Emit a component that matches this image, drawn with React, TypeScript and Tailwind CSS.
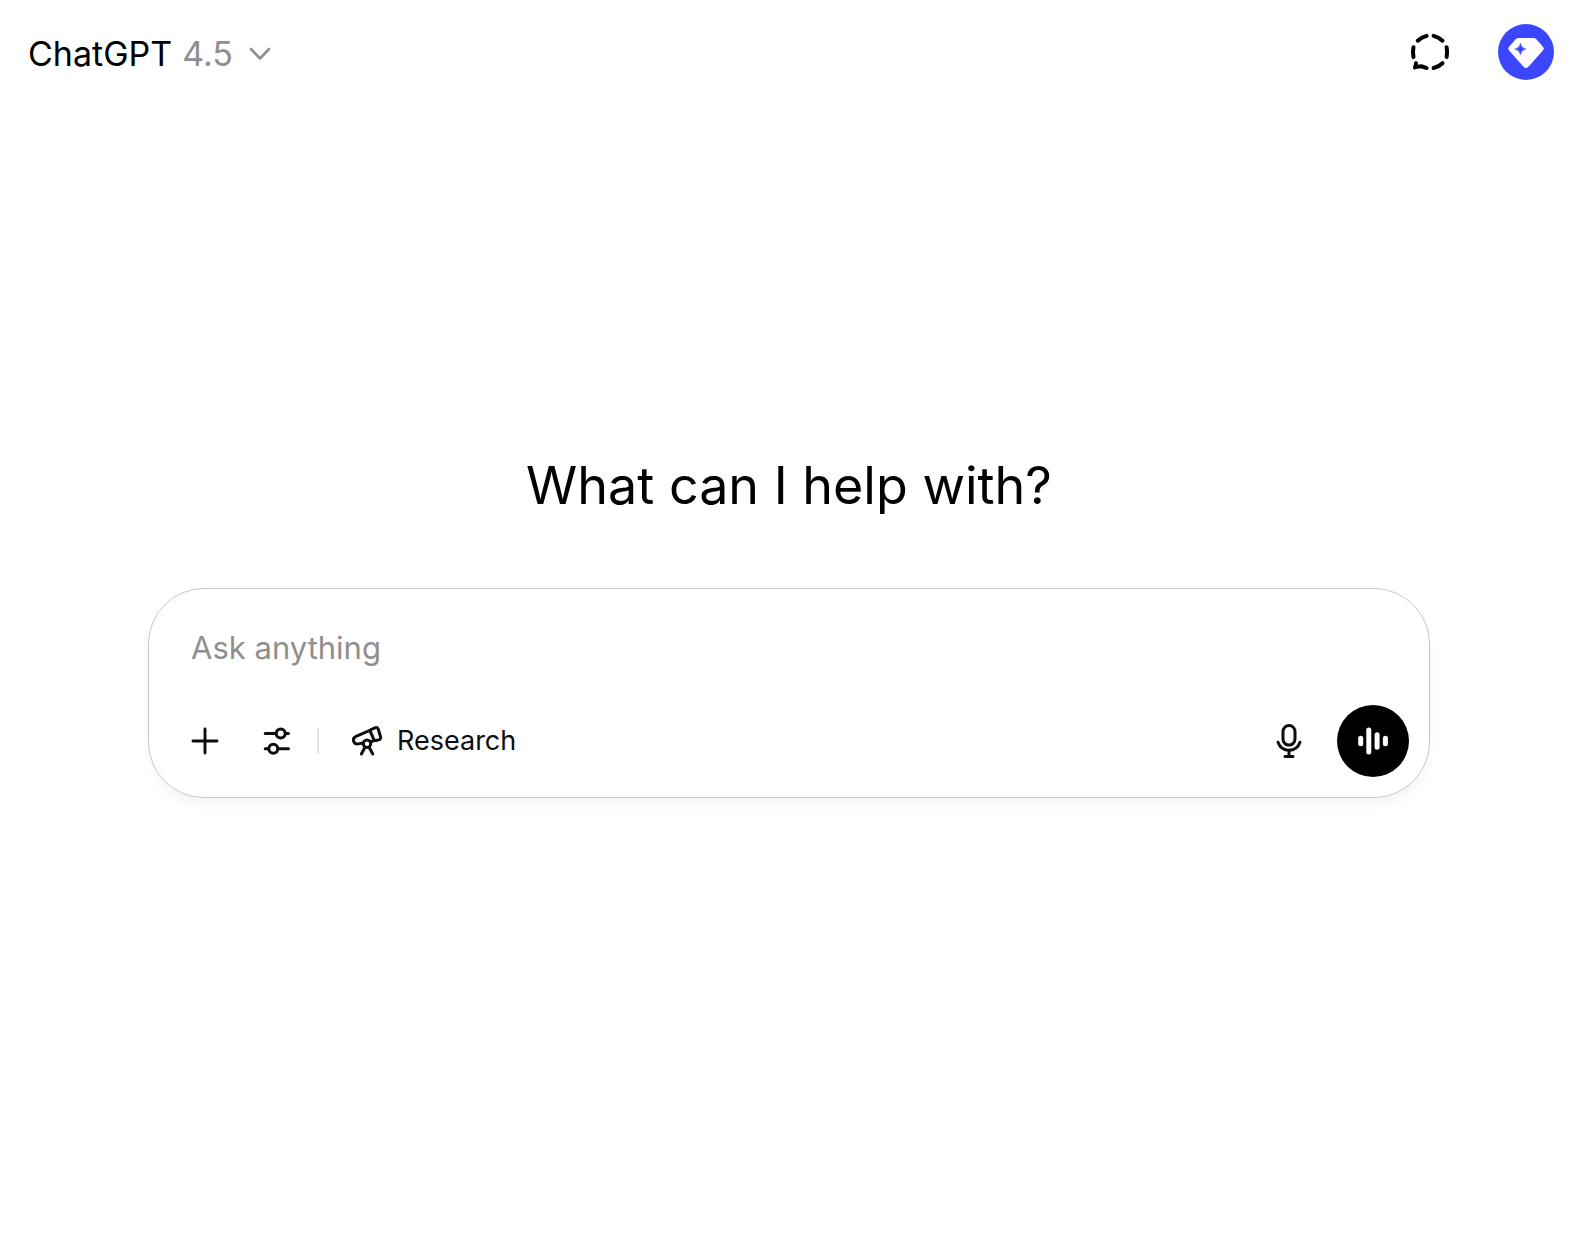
import type { SVGProps } from 'react';

function ChevronIcon(props: SVGProps<SVGSVGElement>) {
  return (
    <svg viewBox="0 0 24 24" fill="none" stroke="currentColor" strokeWidth="2.6" strokeLinecap="round" strokeLinejoin="round" aria-hidden="true" {...props}>
      <path d="M3 8 12 17.500l9-9.500" />
    </svg>
  );
}

function TemporaryChatIcon() {
  return (
    <svg className="w-10 h-10" viewBox="0 0 40 40" fill="none" stroke="currentColor" strokeWidth="4" strokeLinecap="round" strokeLinejoin="round" aria-hidden="true">
      <path d="M7.700 8.700Q11.500 5.200 16.600 3.900" />
      <path d="M23.600 3.900Q28.700 5.200 32.500 8.700" />
      <path d="M36.600 15.200Q37.600 20 36.600 25" />
      <path d="M32.500 31.200Q28.700 34.800 23.600 36" />
      <path d="M16.600 36Q13.500 34.800 11 34.300Q8.500 34.500 5 35.400Q6 33.300 6 31.200" />
      <path d="M3.500 15.200Q2.400 20 3.500 25" />
    </svg>
  );
}

function GemAvatar() {
  return (
    <svg className="w-14 h-14" viewBox="0 0 56 56" aria-hidden="true">
      <circle cx="28" cy="28" r="28" fill="#3c46ff" />
      <path
        d="M20.500 14h15q1.500 0 2.600 1.100l6.800 7.600q1.600 1.900 0 3.800L30.200 43q-2.200 2.100-4.400 0L11.100 26.500q-1.600-1.900 0-3.800l6.800-7.600Q19 14 20.500 14Z"
        fill="#fff"
      />
      <path d="M22.400 19.400Q23.200 24.200 28 25Q23.200 25.800 22.400 30.600Q21.600 25.800 16.800 25Q21.600 24.200 22.400 19.400Z" fill="#3c46ff" stroke="#3c46ff" strokeWidth=".6" strokeLinejoin="round" />
    </svg>
  );
}

function PlusIcon() {
  return (
    <svg className="w-8 h-8" viewBox="0 0 32 32" fill="none" stroke="currentColor" strokeWidth="2.900" strokeLinecap="round" aria-hidden="true">
      <path d="M16 4v24M4 16h24" />
    </svg>
  );
}

function ToolsIcon() {
  return (
    <svg className="w-8 h-8" viewBox="0 0 32 32" fill="none" stroke="currentColor" strokeWidth="3" strokeLinecap="round" aria-hidden="true">
      <path d="M4.200 8.400H15M24.500 8.400h3" />
      <circle cx="19.700" cy="8.400" r="4.500" />
      <path d="M4.200 23.700h3M17 23.700h10.500" />
      <circle cx="12.300" cy="23.700" r="4.500" />
    </svg>
  );
}

function TelescopeIcon() {
  return (
    <svg className="w-8 h-8" viewBox="0 0 32 32" fill="none" stroke="currentColor" strokeWidth="3" strokeLinecap="round" strokeLinejoin="round" aria-hidden="true">
      <path d="M19.500 5.200 5 11.400q-3.200 1.500-2.400 4.700q1.100 3.500 4.700 2.800l4.700-.9M19.800 16.500l3.200-.6" />
      <path d="M20.200 4.500l3.700-1.700q2.500-1 3.400 1.500l2.200 7.400q.7 2.600-1.900 3.200l-2.700.6q-1.700.3-2.200-1.300l-2.900-6.500q-.9-2.300.4-3.200Z" />
      <circle cx="16" cy="18.800" r="3.700" />
      <path d="M13.900 22.200 10.400 29M18.100 22.200l3.700 6.800" />
    </svg>
  );
}

function MicIcon() {
  return (
    <svg className="w-9 h-9" viewBox="0 0 36 36" fill="none" stroke="currentColor" strokeWidth="3" strokeLinecap="round" strokeLinejoin="round" aria-hidden="true">
      <rect x="12" y="2.500" width="12" height="19.600" rx="6" />
      <path d="M7 19.200C9 24.700 13 27.200 18 27.200S27 24.700 29 19.200" />
      <path d="M18 28v5M14 33.400h8" />
    </svg>
  );
}

function VoiceIcon() {
  return (
    <svg className="w-9 h-9" viewBox="0 0 36 36" fill="currentColor" aria-hidden="true">
      <rect x="3.200" y="12.700" width="5" height="10.600" rx="2.500" />
      <rect x="11.300" y="4.400" width="5" height="27.200" rx="2.500" />
      <rect x="19.600" y="9.300" width="5" height="17.400" rx="2.500" />
      <rect x="27.900" y="12.700" width="5" height="10.600" rx="2.500" />
    </svg>
  );
}

function Header() {
  return (
    <header className="flex items-center justify-between pt-6 pl-7 pr-[22px]">
      <button type="button" className="h-14 flex items-center pt-0.5 text-[34px] text-black">
        <span>ChatGPT</span>
        <span className="ml-2.5 text-[#8f8f8f]">4.5</span>
        <ChevronIcon className="w-6 h-6 ml-[15px] text-[#8f8f8f]" />
      </button>
      <div className="flex items-center gap-12">
        <button type="button" aria-label="Temporary chat" className="text-black">
          <TemporaryChatIcon />
        </button>
        <button type="button" aria-label="Open profile menu" className="rounded-full">
          <GemAvatar />
        </button>
      </div>
    </header>
  );
}

function Composer() {
  return (
    <form
      className="w-full max-w-[1282px] rounded-[56px] border border-[#c8c8c8] bg-white px-5 pb-5 shadow-[0_8px_10px_rgba(0,0,0,0.035)]"
      onSubmit={(e) => e.preventDefault()}
    >
      <input
        type="text"
        aria-label="Ask anything"
        placeholder="Ask anything"
        className="block w-full h-[116px] px-[22px] text-[31px] bg-transparent outline-none text-[#0d0d0d] placeholder:text-[#8f8f8f]"
      />
      <div className="flex items-center justify-between text-[#0d0d0d]">
        <div className="flex items-center">
          <button type="button" aria-label="Add photos and files" className="w-18 h-18 flex items-center justify-center rounded-full">
            <PlusIcon />
          </button>
          <button type="button" aria-label="Tools" className="w-18 h-18 flex items-center justify-center rounded-full">
            <ToolsIcon />
          </button>
          <div className="w-0.5 h-[26px] ml-1 bg-[#e3e3e3]" />
          <button type="button" className="h-18 flex items-center gap-3.5 pl-8 pr-6 rounded-full text-[27px]">
            <TelescopeIcon />
            Research
          </button>
        </div>
        <div className="flex items-center gap-3">
          <button type="button" aria-label="Dictate" className="w-18 h-18 flex items-center justify-center rounded-full">
            <MicIcon />
          </button>
          <button type="button" aria-label="Use voice mode" className="w-18 h-18 flex items-center justify-center rounded-full bg-black text-white">
            <VoiceIcon />
          </button>
        </div>
      </div>
    </form>
  );
}

export default function App() {
  return (
    <div className="min-h-screen flex flex-col bg-white font-['Inter',sans-serif]">
      <Header />
      <main className="flex-1 flex flex-col items-center justify-center pl-0.5 pb-[66px]">
        <h1 className="mb-[68px] text-[52px] leading-[68px] text-black">What can I help with?</h1>
        <Composer />
      </main>
    </div>
  );
}
